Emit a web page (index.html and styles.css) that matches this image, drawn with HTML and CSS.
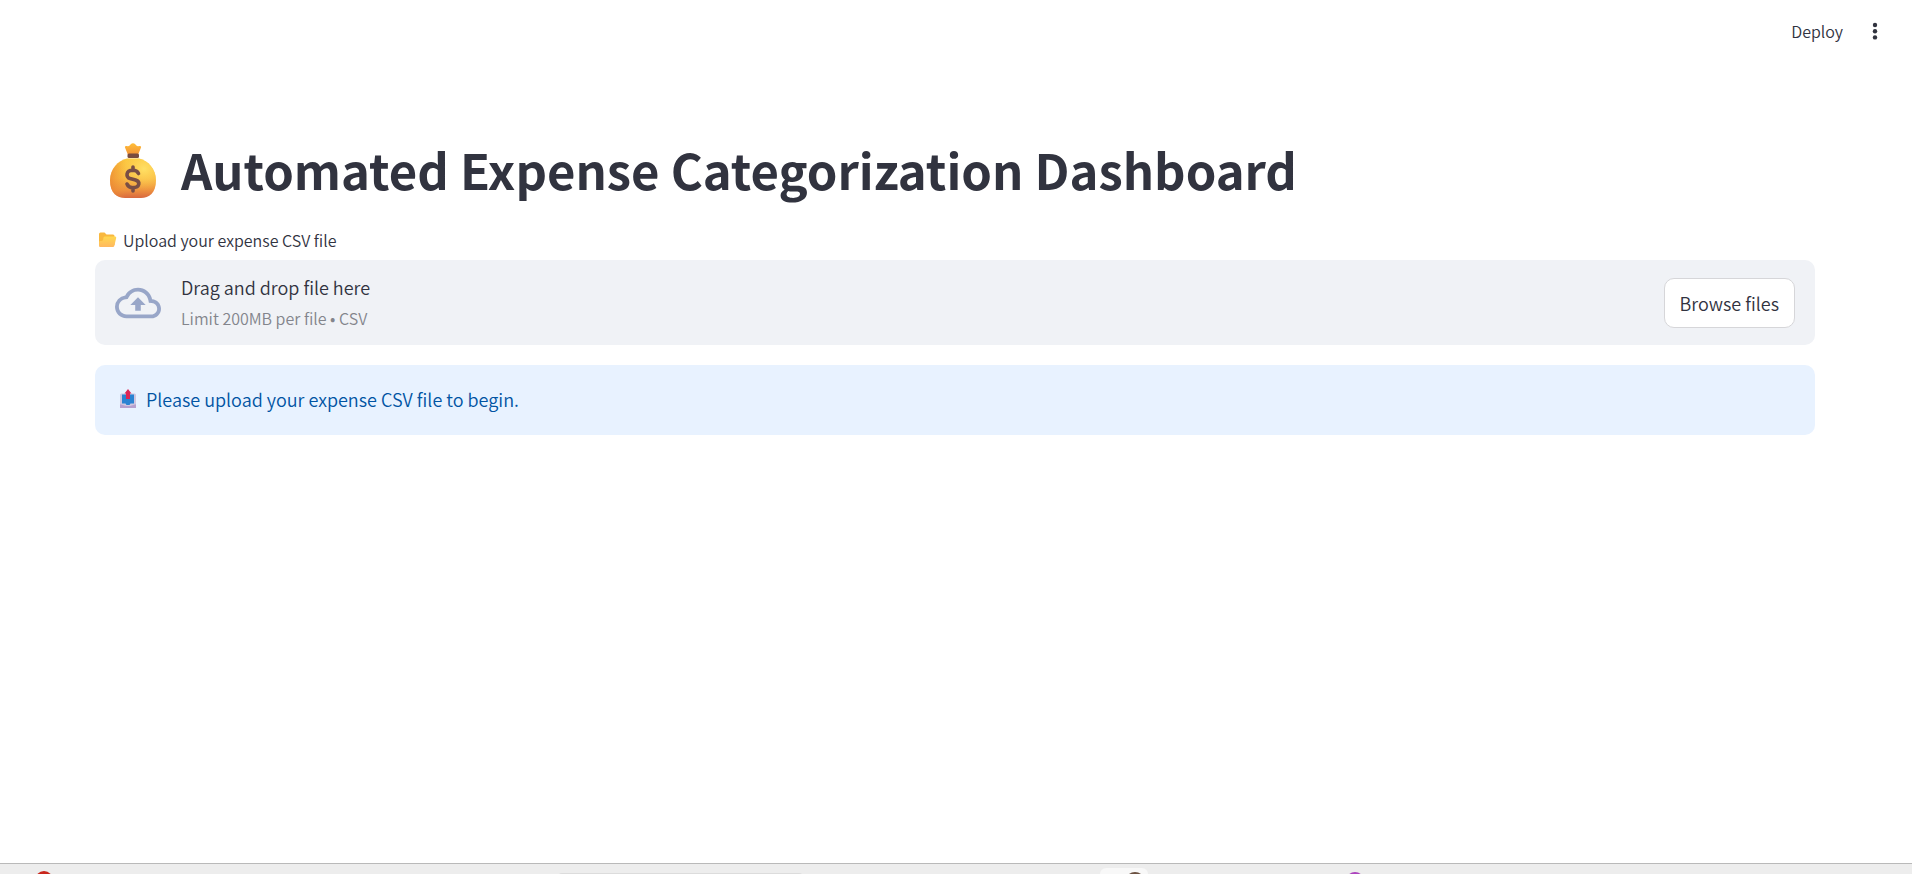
FILE: index.html
```html
<!DOCTYPE html>
<html lang="en">
<head>
<meta charset="utf-8">
<title>Automated Expense Categorization Dashboard</title>
<link rel="stylesheet" href="styles.css">
</head>
<body>
<header class="toolbar">
  <button class="toolbar-button" type="button">Deploy</button>
  <button class="menu-button" type="button" aria-label="Main menu">
    <svg class="menu-icon" viewBox="0 0 20 20" aria-hidden="true"><circle cx="10" cy="4" r="2.2"/><circle cx="10" cy="10.2" r="2.2"/><circle cx="10" cy="16.4" r="2.2"/></svg>
  </button>
</header>
<main class="content">
  <h1 class="title">
    <svg class="title-icon" viewBox="0 0 46 56" aria-hidden="true">
      <defs>
        <linearGradient id="bag" x1="0" y1="0" x2="0" y2="1"><stop offset="0" stop-color="#fbc63c"/><stop offset=".5" stop-color="#f8b541"/><stop offset=".8" stop-color="#ee923f"/><stop offset="1" stop-color="#d8683f"/></linearGradient>
        <radialGradient id="shine" cx=".74" cy=".26" r=".55"><stop offset="0" stop-color="#ffe066"/><stop offset="1" stop-color="#ffd451" stop-opacity="0"/></radialGradient>
        <linearGradient id="side" x1="0" x2="1"><stop offset="0" stop-color="#e87b2c" stop-opacity=".6"/><stop offset=".35" stop-color="#f09a35" stop-opacity="0"/></linearGradient>
        <linearGradient id="neck" x1="0" y1="0" x2="0" y2="1"><stop offset="0" stop-color="#ffbf38"/><stop offset="1" stop-color="#f39136"/></linearGradient>
      </defs>
      <path d="M17 15.500C8 17.500 0 26 0 37.500C0 50 7 55 15 55H31C39 55 46 50 46 37.500C46 26 38 17.500 29 15.500Z" fill="url(#bag)"/>
      <path d="M17 15.500C8 17.500 0 26 0 37.500C0 50 7 55 15 55H31C39 55 46 50 46 37.500C46 26 38 17.500 29 15.500Z" fill="url(#side)"/>
      <path d="M17 15.500C8 17.500 0 26 0 37.500C0 50 7 55 15 55H31C39 55 46 50 46 37.500C46 26 38 17.500 29 15.500Z" fill="url(#shine)"/>
      <path d="M18 12L15 4.500Q14.500 2.500 17 3Q19 4 20.500 1.500Q23 -1 25.500 1.500Q27 4 29 3Q31.500 2.500 31 4.500L28 12Z" fill="url(#neck)"/>
      <rect x="17.500" y="10.500" width="11.500" height="4.500" rx="1.500" fill="#7a4b3e"/>
      <path d="M28.500 30.500C27 27.500 24.500 27.300 22.800 27.300C15.500 27.300 15.700 34.300 20 35.600L25.500 37C30.500 38.600 30 44.700 22.800 44.700C19.500 44.700 18 43.500 17 41M23 24V27.500M23 44.500V48" fill="none" stroke="#794e45" stroke-width="3.600" stroke-linecap="round"/>
    </svg>
    <span>Automated Expense Categorization Dashboard</span>
  </h1>
  <section class="uploader">
    <label class="upload-label" for="browse">
      <svg class="folder-icon" viewBox="0 0 18 16" aria-hidden="true">
        <defs><linearGradient id="folder" x1="0" y1="0" x2="0" y2="1"><stop offset="0" stop-color="#ffd84f"/><stop offset="1" stop-color="#ffb85f"/></linearGradient></defs>
        <path d="M0 2Q0 .5 1.500 .5H5.500L7.500 2.500H14Q15.500 2.500 15.500 4V13H0Z" fill="#f9b83e"/>
        <path d="M4.500 5.500Q5 4.500 6 4.500H16.300Q17.500 4.500 17.200 6L15.300 14Q15 15 14 15H1Q0 15 0 13.500V10Q0 9 1 9H2.500Q3.500 9 4 8Z" fill="url(#folder)"/>
      </svg>
      <span>Upload your expense CSV file</span>
    </label>
    <div class="dropzone">
      <svg class="cloud-icon" viewBox="0 0 24 24" aria-hidden="true"><path d="M19.350 10.040A7.490 7.490 0 0 0 12 4C9.110 4 6.600 5.640 5.350 8.040A5.994 5.994 0 0 0 0 14c0 3.310 2.690 6 6 6h13c2.760 0 5-2.240 5-5 0-2.640-2.050-4.780-4.650-4.960zM19 18H6c-2.210 0-4-1.790-4-4 0-2.050 1.530-3.760 3.560-3.970l1.070-.11.5-.95A5.469 5.469 0 0 1 12 6c2.620 0 4.880 1.860 5.390 4.430l.3 1.500 1.530.11A2.980 2.980 0 0 1 22 15c0 1.650-1.350 3-3 3zM8 13h2.550v3h2.900v-3H16l-4-4z"/></svg>
      <div class="instructions">
        <span class="drop-text">Drag and drop file here</span>
        <span class="limit-text">Limit 200MB per file • CSV</span>
      </div>
      <button class="browse-button" id="browse" type="button">Browse files</button>
    </div>
  </section>
  <div class="notice" role="status">
    <svg class="outbox-icon" viewBox="0 0 16 20" aria-hidden="true">
      <rect y="4.500" width="16" height="14.500" rx="1.500" fill="#cfc6df"/>
      <path d="M2 5.500H14V14.500H10.500L9.500 16H6.500L5.500 14.500H2Z" fill="#2b83d2"/>
      <path d="M0 16Q0 15 1 15.500L6 17H10L15 15.500Q16 15 16 16V19H0Z" fill="#b6a0ce"/>
      <path d="M8 0L11.500 4.500H10V10H6V4.500H4.500Z" fill="#df2555"/>
    </svg>
    <span>Please upload your expense CSV file to begin.</span>
  </div>
</main>
<footer class="taskbar" aria-hidden="true">
  <i class="dot dot-red"></i>
  <i class="search-pill"></i>
  <i class="tile"><i class="dot dot-brown"></i></i>
  <i class="dot dot-purple"></i>
</footer>
</body>
</html>
```
FILE: styles.css
```css
* { box-sizing: border-box; }

body {
  margin: 0;
  height: 100vh;
  display: flex;
  flex-direction: column;
  overflow: hidden;
  background: #fff;
  color: #31333f;
  font-family: "Noto Sans CJK JP", "Noto Sans", sans-serif;
  font-size: 18px;
  font-weight: 350;
  line-height: 30px;
}

button {
  font: inherit;
  color: inherit;
  cursor: pointer;
}

svg { display: block; flex: none; }

.toolbar {
  display: flex;
  justify-content: flex-end;
  align-items: center;
  gap: 20px;
  height: 62px;
  flex: none;
  padding-right: 25px;
}

.toolbar-button,
.menu-button {
  border: 0;
  padding: 0;
  background: none;
}

.toolbar-button { font-size: 16px; }
.menu-button { padding: 0 2px; }
.menu-icon { width: 20px; height: 20px; fill: #31333f; }

.content {
  flex: 1;
  padding: 74px 97px 0 95px;
}

.title {
  display: flex;
  align-items: flex-start;
  gap: 25px;
  margin: 0;
  padding-left: 15px;
  font-size: 49px;
  font-weight: 700;
  line-height: 66px;
}

.title-icon {
  width: 46px;
  height: 56px;
  margin: 7px 0;
}

.uploader { margin-top: 19px; }

.upload-label {
  display: flex;
  align-items: center;
  gap: 6px;
  width: fit-content;
  margin-bottom: 5px;
  padding-left: 4px;
  font-size: 16px;
}

.folder-icon { width: 18px; height: 16px; }

.dropzone {
  display: flex;
  align-items: center;
  padding: 12px 20px;
  border-radius: 10px;
  background: #f0f2f6;
}

.cloud-icon { width: 46px; height: 46px; fill: #98a6c8; }

.instructions {
  display: flex;
  flex-direction: column;
  gap: 1px;
  margin: 0 auto 0 20px;
}

.limit-text { font-size: 16px; color: #83858c; }

.browse-button {
  height: 50px;
  padding: 0 15px;
  border: 1px solid #d6d6d9;
  border-radius: 10px;
  background: #fff;
}

.notice {
  display: flex;
  align-items: center;
  gap: 10px;
  margin-top: 20px;
  padding: 19px 25px 21px;
  border-radius: 10px;
  background: #e8f2ff;
  color: #0054a3;
}

.outbox-icon { width: 16px; height: 20px; }

.taskbar {
  display: grid;
  grid-template-columns: 35fr 523fr 245fr 297fr 48fr 198fr 566fr;
  align-items: start;
  flex: none;
  height: 11px;
  border-top: 1px solid #b9b9b9;
  background: #ededed;
  overflow: hidden;
}

.dot { display: block; border-radius: 50%; }

.dot-red {
  grid-column: 2;
  width: 18px;
  height: 18px;
  margin-top: 7px;
  background: #c9261c;
}

.search-pill {
  grid-column: 3;
  height: 30px;
  margin-top: 9px;
  border-radius: 4px;
  background: #dcdcdc;
}

.tile {
  grid-column: 5;
  height: 40px;
  margin-top: 4px;
  padding: 4px 0 0 25px;
  border-radius: 6px;
  background: #f8f8f8;
}

.dot-brown {
  width: 20px;
  height: 20px;
  background: #6b5141;
}

.dot-purple {
  grid-column: 7;
  width: 18px;
  height: 18px;
  margin-top: 8px;
  background: #ac43bd;
}
```
